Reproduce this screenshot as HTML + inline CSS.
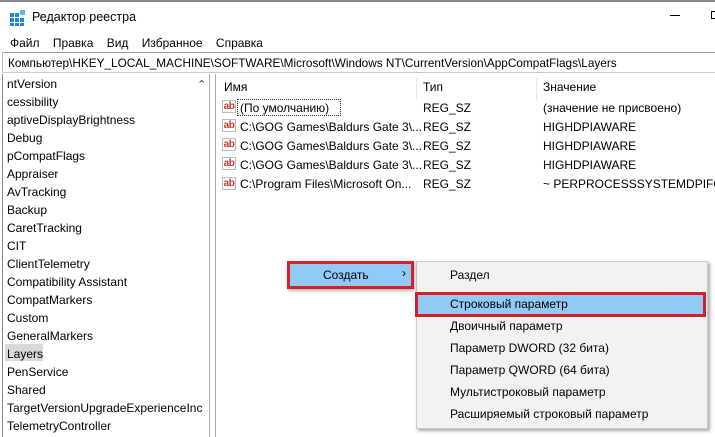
<!DOCTYPE html>
<html><head><meta charset="utf-8"><style>
*{margin:0;padding:0;box-sizing:border-box}
body{width:715px;height:437px;overflow:hidden;background:#fff;font-family:"Liberation Sans",sans-serif;font-size:12px;color:#000;position:relative}
.a{position:absolute;white-space:nowrap}
.ab{position:absolute;width:14px;height:13px;border:1px solid #bbb;background:#fff;color:#c0392b;font-size:10px;font-weight:bold;line-height:11px;text-align:center;letter-spacing:-0.5px}
</style></head><body>
<div class="a" style="left:0;top:0;width:715px;height:2px;background:#888"></div>
<svg class="a" style="left:10px;top:10px" width="16" height="16"><g fill="#1e88d8"><rect x="0" y="3" width="4" height="4"/><rect x="5" y="3" width="4" height="4"/><rect x="0" y="8" width="4" height="4"/><rect x="5" y="8" width="4" height="4"/><rect x="10" y="8" width="4" height="4"/><rect x="0" y="13" width="4" height="3"/><rect x="5" y="13" width="4" height="3"/><rect x="10" y="13" width="4" height="3"/><rect x="10" y="0" width="5" height="5" fill="#5fb3ee"/></g></svg>
<div class="a" style="left:32px;top:10px;font-size:12.5px">Редактор реестра</div>
<div class="a" style="left:670px;top:15px;width:10px;height:1px;background:#000"></div>
<div class="a" style="left:711px;top:11px;width:8px;height:8px;border:1px solid #000"></div>
<div class="a" style="left:10px;top:36px">Файл&nbsp;&nbsp;&nbsp;&nbsp;Правка&nbsp;&nbsp;&nbsp;&nbsp;Вид&nbsp;&nbsp;&nbsp;&nbsp;Избранное&nbsp;&nbsp;&nbsp;&nbsp;Справка</div>
<div class="a" style="left:2px;top:52px;width:713px;height:21px;border-top:1px solid #999;border-bottom:1px solid #ccc;border-left:1px solid #bbb"></div>
<div class="a" style="left:8px;top:56px;font-size:11.8px">Компьютер\HKEY_LOCAL_MACHINE\SOFTWARE\Microsoft\Windows NT\CurrentVersion\AppCompatFlags\Layers</div>
<div class="a" style="left:2px;top:74px;width:1px;height:363px;background:#888"></div>
<div class="a" style="left:209px;top:74px;width:1px;height:363px;background:#aaa"></div>
<div class="a" style="left:215px;top:74px;width:1px;height:363px;background:#aaa"></div>
<div class="a" style="left:197px;top:78px;font-size:11px;color:#444">⌃</div>
<div class="a" style="left:5px;top:344px;width:38px;height:17px;background:#d9d9d9"></div>
<div class="a" style="left:7px;top:75px;line-height:18px">ntVersion<br>cessibility<br>aptiveDisplayBrightness<br>Debug<br>pCompatFlags<br>Appraiser<br>AvTracking<br>Backup<br>CaretTracking<br>CIT<br>ClientTelemetry<br>Compatibility Assistant<br>CompatMarkers<br>Custom<br>GeneralMarkers<br>Layers<br>PenService<br>Shared<br>TargetVersionUpgradeExperienceInc<br>TelemetryController</div>
<div class="a" style="left:416px;top:78px;width:1px;height:22px;background:#e5e5e5"></div>
<div class="a" style="left:536px;top:78px;width:1px;height:22px;background:#e5e5e5"></div>
<div class="a" style="left:224px;top:80px">Имя</div>
<div class="a" style="left:423px;top:80px">Тип</div>
<div class="a" style="left:543px;top:80px">Значение</div>
<div class="ab" style="left:222px;top:100px">ab</div><div class="ab" style="left:222px;top:119px">ab</div><div class="ab" style="left:222px;top:138px">ab</div><div class="ab" style="left:222px;top:157px">ab</div><div class="ab" style="left:222px;top:177px">ab</div>
<div class="a" style="left:237px;top:99px;width:104px;height:17px;border:1px dotted #333"></div>
<div class="a" style="left:240px;top:99px;line-height:19px">(По умолчанию)<br>C:\GOG Games\Baldurs Gate 3\...<br>C:\GOG Games\Baldurs Gate 3\...<br>C:\GOG Games\Baldurs Gate 3\...<br>C:\Program Files\Microsoft On...</div>
<div class="a" style="left:423px;top:99px;line-height:19px">REG_SZ<br>REG_SZ<br>REG_SZ<br>REG_SZ<br>REG_SZ</div>
<div class="a" style="left:543px;top:99px;line-height:19px">(значение не присвоено)<br>HIGHDPIAWARE<br>HIGHDPIAWARE<br>HIGHDPIAWARE<br>~ PERPROCESSSYSTEMDPIFORCE</div>
<div class="a" style="left:416px;top:261px;width:292px;height:168px;background:#f2f2f2;border:1px solid #ccc;box-shadow:2px 2px 3px rgba(0,0,0,.35)"></div>
<div class="a" style="left:287px;top:261px;width:127px;height:28px;background:#91c9f7;border:3px solid #d81f26;box-shadow:1px 2px 3px rgba(0,0,0,.3)"></div>
<div class="a" style="left:323px;top:268px">Создать</div>
<div class="a" style="left:402px;top:266px;font-size:12px">›</div>
<div class="a" style="left:415px;top:292px;width:291px;height:25px;background:#91c9f7;border:3px solid #d81f26"></div>
<div class="a" style="left:450px;top:264px;line-height:22px">Раздел</div>
<div class="a" style="left:450px;top:293px;line-height:22px">Строковый параметр<br>Двоичный параметр<br>Параметр DWORD (32 бита)<br>Параметр QWORD (64 бита)<br>Мультистроковый параметр<br>Расширяемый строковый параметр</div>
</body></html>
